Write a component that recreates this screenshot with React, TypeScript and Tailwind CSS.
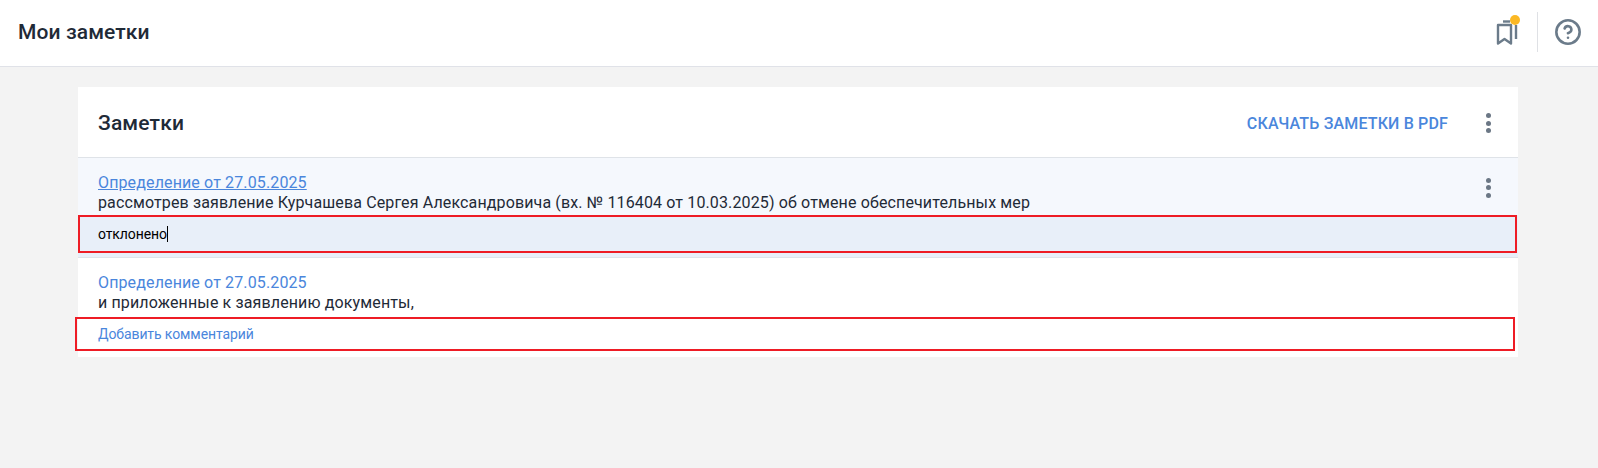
import { HelpCircle } from "lucide-react";

function Dots() {
  return (
    <div className="flex w-6 flex-col items-center gap-[2.3px]">
      <span className="h-[5px] w-[5px] rounded-full bg-[#6b7785]" />
      <span className="h-[5px] w-[5px] rounded-full bg-[#6b7785]" />
      <span className="h-[5px] w-[5px] rounded-full bg-[#6b7785]" />
    </div>
  );
}

function BookmarksIcon() {
  return (
    <svg width="24" height="28" viewBox="0 0 24 28" fill="none" stroke="#6b7b8a" strokeWidth="2.4">
      <path d="M2 25.5V7h13v18.5l-6.5-4.5z" strokeLinejoin="round" />
      <path d="M7 3.5h7" />
      <path d="M20 7v14" />
    </svg>
  );
}

export default function App() {
  return (
    <div className="min-h-[468px] bg-[#f3f3f3] font-['Roboto',sans-serif]">
      <header className="flex h-[67px] items-center justify-between border-b border-[#e0e2e8] bg-white pb-[2px] pl-[18px] pr-4">
        <h1 className="pt-px text-[21px] font-medium tracking-[0.1px] text-[#1f2a37]">Мои заметки</h1>
        <div className="flex items-center">
          <div className="relative h-7 w-6">
            <BookmarksIcon />
            <span className="absolute left-[14px] top-[-3px] h-[10px] w-[10px] rounded-full bg-[#fbb824]" />
          </div>
          <div className="ml-[17px] mr-4 h-10 w-px bg-[#dfe1e5]" />
          <HelpCircle size={28} color="#6b7b8a" strokeWidth={2.2} />
        </div>
      </header>
      <main className="ml-[78px] mr-20 mt-5 bg-white">
        <div className="flex h-[71px] items-center justify-between border-b border-[#dfe3e8] pl-5 pr-[18px]">
          <h2 className="pt-1 text-[21px] font-medium tracking-[0.15px] text-[#1f2a37]">Заметки</h2>
          <div className="flex items-center gap-7">
            <span className="pt-1 text-base font-medium tracking-[0.15px] text-[#4a86dc]">СКАЧАТЬ ЗАМЕТКИ В PDF</span>
            <div className="pt-[2px]">
              <Dots />
            </div>
          </div>
        </div>
        <div className="border-b border-[#dfe3e8] bg-[#f5f8fd]">
          <div className="flex justify-between pl-5 pr-[18px] pt-[15px]">
            <div className="text-base leading-5 tracking-[0.13px]">
              <a className="text-[#4a86dc] underline">Определение от 27.05.2025</a>
              <p className="text-[#1f2a37]">
                рассмотрев заявление Курчашева Сергея Александровича (вх. № 116404 от 10.03.2025) об отмене обеспечительных мер
              </p>
            </div>
            <div className="pt-[5px]">
              <Dots />
            </div>
          </div>
          <div className="relative mt-[2px] h-[42px] bg-[#e8eff9] text-sm tracking-[-0.1px] text-black">
            <div className="flex h-[38px] items-center pl-5">
              <span>отклонено</span>
              <span className="h-4 w-px bg-black" />
            </div>
            <div className="absolute left-0 right-px top-0 h-[38px] border-2 border-[#ee1c25]" />
          </div>
        </div>
        <div>
          <div className="pl-5 pt-[15px] text-base leading-5 tracking-[0.13px]">
            <a className="text-[#4a86dc]">Определение от 27.05.2025</a>
            <p className="text-[#1f2a37]">и приложенные к заявлению документы,</p>
          </div>
          <div className="relative mt-1 pb-[6px]">
            <div className="flex h-[34px] items-center pl-5 text-sm tracking-[-0.1px] text-[#4a86dc]">Добавить комментарий</div>
            <div className="absolute left-[-3px] right-[3px] top-0 h-[34px] border-2 border-[#ee1c25]" />
          </div>
        </div>
      </main>
    </div>
  );
}
